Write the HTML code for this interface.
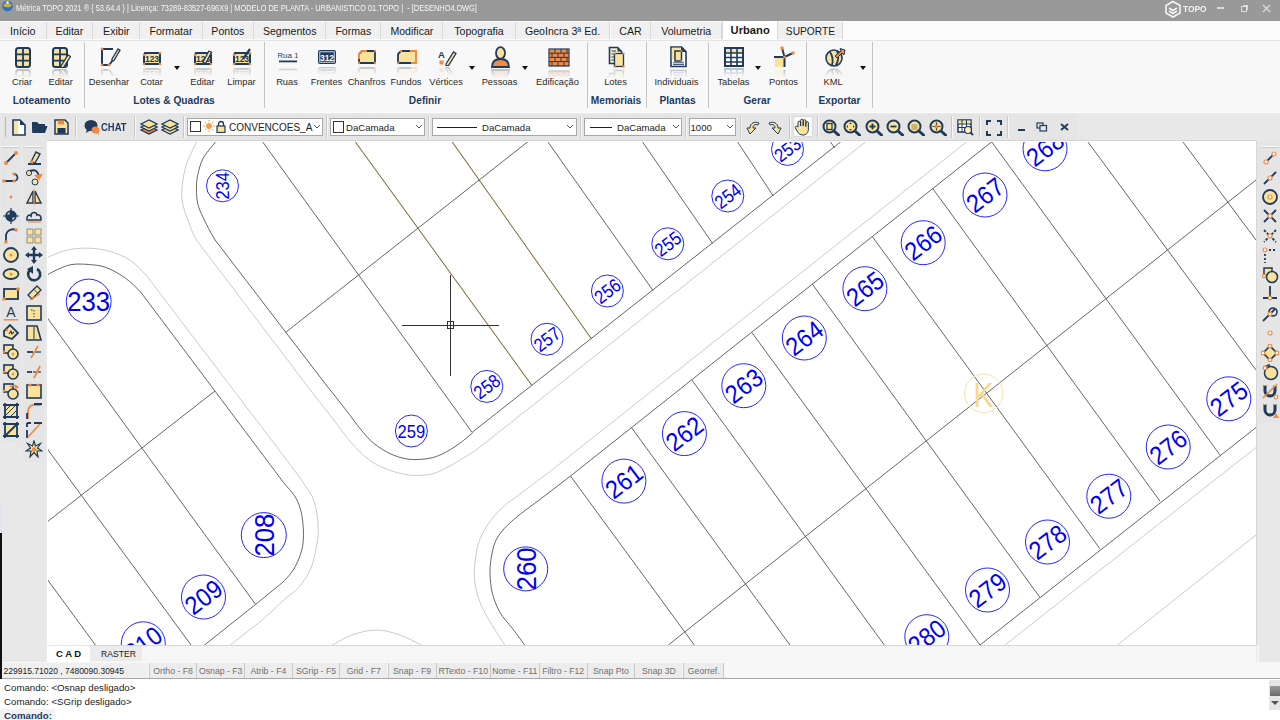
<!DOCTYPE html>
<html><head><meta charset="utf-8"><title>Metrica TOPO</title>
<style>
html,body{margin:0;padding:0;}
body{width:1280px;height:720px;overflow:hidden;position:relative;background:#e8e8e8;font-family:"Liberation Sans",sans-serif;color:#222;}
.t{position:absolute;white-space:nowrap;}
.rl{position:absolute;font-size:9.3px;color:#2a2a2a;white-space:nowrap;transform:translateX(-50%);top:76.7px;line-height:11px;}
.gl{position:absolute;font-size:10.2px;font-weight:bold;color:#1e3a5c;white-space:nowrap;transform:translateX(-50%);top:95px;line-height:12px;}
.sep{position:absolute;width:1px;background:#c4c4c4;}
.tab{position:absolute;top:22px;height:17px;background:#f0f0f0;border-right:1px solid #d9d9d9;box-sizing:border-box;font-size:10.6px;color:#1a1a1a;text-align:center;line-height:19px;}
.tsep{position:absolute;top:116px;height:22px;width:1px;background:#c8c8c8;border-right:1px solid #f8f8f8;}
.combo{position:absolute;top:118px;height:18px;background:#fff;border:1px solid #a8a8a8;box-sizing:border-box;}
.ct{position:absolute;top:2px;font-size:9.6px;line-height:13px;color:#222;white-space:nowrap;}
.chev{position:absolute;top:5px;width:8px;height:6px;}
.sb{position:absolute;top:663px;height:15px;background:#ececec;border-left:1px solid #c9c9c9;box-sizing:border-box;font-size:8.7px;color:#707070;text-align:center;line-height:16px;}
.refl{opacity:0.3;-webkit-mask-image:linear-gradient(#000,transparent);mask-image:linear-gradient(#000,transparent);}
</style></head><body>

<div style="position:absolute;left:0px;top:0px;width:1280px;height:21px;background:#999999"></div>
<svg style="position:absolute;left:1px;top:0px" width="13" height="12" viewBox="0 0 13 12"><circle cx="6.5" cy="6" r="5.3" fill="#2a73c0"/><ellipse cx="6.5" cy="5.2" rx="4" ry="2" fill="#c9b040"/><circle cx="6.5" cy="2.5" r="1.3" fill="#fff"/></svg>
<div style="position:absolute;left:16px;top:3.5px;white-space:nowrap;font-size:8.2px;line-height:9px;color:#f7f7f7;transform:scaleX(0.905);transform-origin:0 0;">Métrica TOPO 2021 ® { 53.64.4 } | Licença: 73289-83527-696X9 | MODELO DE PLANTA - URBANISTICO 01.TOPO |&nbsp; - [DESENHO4.DWG]</div>
<svg style="position:absolute;left:1163px;top:0px" width="20" height="18" viewBox="0 0 20 18"><g fill="none" stroke="#f4f4f4" stroke-width="1.6"><path d="M10 1.5 L17 5.5 L17 13 L10 17 L3 13 L3 5.5 Z"/><path d="M6 8 L10 10.5 L14 8 M6 11 L10 13.5 L14 11"/></g></svg>
<div style="position:absolute;left:1182.5px;top:2.5px;white-space:nowrap;font-size:9.5px;line-height:12px;font-weight:bold;color:#f2f2f2;letter-spacing:0px;transform:scaleX(0.88);transform-origin:0 0;">TOPO</div>
<div style="position:absolute;left:1217px;top:7px;width:7px;height:1.5px;background:#dcdcdc"></div>
<div style="position:absolute;left:1241px;top:6px;width:6px;height:6px;border:1.2px solid #dcdcdc;box-sizing:border-box"></div>
<div style="position:absolute;left:1242.5px;top:4.5px;width:5.5px;height:5.5px;border-top:1.2px solid #dcdcdc;border-right:1.2px solid #dcdcdc;box-sizing:border-box"></div>
<svg style="position:absolute;left:1262px;top:4px" width="9" height="9" viewBox="0 0 9 9"><path d="M1 1 L8 8 M8 1 L1 8" stroke="#dcdcdc" stroke-width="1.2"/></svg>
<div style="position:absolute;left:0px;top:21px;width:1280px;height:19px;background:#fbfbfb"></div>
<div class="tab" style="left:0.0px;width:46.5px">Início</div>
<div class="tab" style="left:46.5px;width:46.9px">Editar</div>
<div class="tab" style="left:93.4px;width:46.9px">Exibir</div>
<div class="tab" style="left:140.3px;width:62.3px">Formatar</div>
<div class="tab" style="left:202.6px;width:51.5px">Pontos</div>
<div class="tab" style="left:254.1px;width:72.2px">Segmentos</div>
<div class="tab" style="left:326.3px;width:55.1px">Formas</div>
<div class="tab" style="left:381.4px;width:62.0px">Modificar</div>
<div class="tab" style="left:443.4px;width:72.2px">Topografia</div>
<div class="tab" style="left:515.6px;width:94.9px">GeoIncra 3ª Ed.</div>
<div class="tab" style="left:610.5px;width:40.9px">CAR</div>
<div class="tab" style="left:651.4px;width:70.6px">Volumetria</div>
<div class="tab" style="left:722px;width:56.3px;top:21px;height:19px;background:#ffffff;border-left:1px solid #d9d9d9;font-weight:bold;font-size:11.2px;line-height:18px;">Urbano</div>
<div class="tab" style="left:778.3px;width:65.2px;font-size:10.2px">SUPORTE</div>
<div style="position:absolute;left:0px;top:40px;width:1280px;height:72px;background:#f8f8f8;border-top:1px solid #e4e4e4;box-sizing:border-box"></div>
<div class="sep" style="left:84px;top:42px;height:66px"></div>
<div class="sep" style="left:264px;top:42px;height:66px"></div>
<div class="sep" style="left:587px;top:42px;height:66px"></div>
<div class="sep" style="left:646px;top:42px;height:66px"></div>
<div class="sep" style="left:708px;top:42px;height:66px"></div>
<div class="sep" style="left:806px;top:42px;height:66px"></div>
<div class="sep" style="left:872px;top:42px;height:66px"></div>
<svg style="position:absolute;left:14.5px;top:47px" width="16" height="21" viewBox="0 0 16 21"><rect x="1" y="1" width="14" height="19" rx="2.5" fill="#f9e29c" stroke="#1e3a5c" stroke-width="2"/><path d="M8 1 V20 M1 7.3 H15 M1 13.6 H15" stroke="#1e3a5c" stroke-width="1.8"/></svg><svg class="refl" style="position:absolute;left:14.5px;top:69px;" width="16" height="9" viewBox="0 0 16 9"><g transform="translate(0 9) scale(1 -1)"><g transform="translate(0 -12)"><rect x="1" y="1" width="14" height="19" rx="2.5" fill="#f9e29c" stroke="#1e3a5c" stroke-width="2"/><path d="M8 1 V20 M1 7.3 H15 M1 13.6 H15" stroke="#1e3a5c" stroke-width="1.8"/></g></g></svg>
<svg style="position:absolute;left:51.5px;top:47px" width="19" height="21" viewBox="0 0 19 21"><rect x="1" y="1" width="14" height="19" rx="2.5" fill="#f9e29c" stroke="#1e3a5c" stroke-width="2"/><path d="M8 1 V20 M1 7.3 H15 M1 13.6 H15" stroke="#1e3a5c" stroke-width="1.8"/><path d="M9 19 L16 8 L18.5 9.5 L11.5 20.5 L9 21 Z" fill="#f9e29c" stroke="#1e3a5c" stroke-width="1.3"/></svg><svg class="refl" style="position:absolute;left:51.5px;top:69px;" width="19" height="9" viewBox="0 0 19 9"><g transform="translate(0 9) scale(1 -1)"><g transform="translate(0 -12)"><rect x="1" y="1" width="14" height="19" rx="2.5" fill="#f9e29c" stroke="#1e3a5c" stroke-width="2"/><path d="M8 1 V20 M1 7.3 H15 M1 13.6 H15" stroke="#1e3a5c" stroke-width="1.8"/><path d="M9 19 L16 8 L18.5 9.5 L11.5 20.5 L9 21 Z" fill="#f9e29c" stroke="#1e3a5c" stroke-width="1.3"/></g></g></svg>
<svg style="position:absolute;left:99.5px;top:46px" width="21" height="21" viewBox="0 0 21 21"><path d="M2 3 H13 M2 3 V19 H9 L13 14" fill="none" stroke="#1e3a5c" stroke-width="2"/><circle cx="2" cy="3" r="1.4" fill="#ef8a45"/><circle cx="2" cy="19" r="1.4" fill="#ef8a45"/><circle cx="9" cy="19" r="1.4" fill="#ef8a45"/><path d="M12 13 L18 3 L20 4.2 L14 14.5 L12 15 Z" fill="#f9e29c" stroke="#1e3a5c" stroke-width="1.3"/></svg><svg class="refl" style="position:absolute;left:99.5px;top:68px;" width="21" height="9" viewBox="0 0 21 9"><g transform="translate(0 9) scale(1 -1)"><g transform="translate(0 -12)"><path d="M2 3 H13 M2 3 V19 H9 L13 14" fill="none" stroke="#1e3a5c" stroke-width="2"/><circle cx="2" cy="3" r="1.4" fill="#ef8a45"/><circle cx="2" cy="19" r="1.4" fill="#ef8a45"/><circle cx="9" cy="19" r="1.4" fill="#ef8a45"/><path d="M12 13 L18 3 L20 4.2 L14 14.5 L12 15 Z" fill="#f9e29c" stroke="#1e3a5c" stroke-width="1.3"/></g></g></svg>
<svg style="position:absolute;left:142.0px;top:50px" width="20" height="16" viewBox="0 0 20 16"><path d="M3 3 H18 V14 H2 V5 Z" fill="#f9e29c" stroke="#1e3a5c" stroke-width="2"/><text x="10" y="12" font-size="8.5" font-family="Liberation Sans" font-weight="bold" fill="#1e3a5c" text-anchor="middle">123</text><circle cx="2" cy="5" r="1.3" fill="#ef8a45"/><circle cx="18" cy="3" r="1.3" fill="#ef8a45"/><circle cx="2" cy="14" r="1.3" fill="#ef8a45"/><circle cx="18" cy="14" r="1.3" fill="#ef8a45"/></svg><svg class="refl" style="position:absolute;left:142.0px;top:67px;" width="20" height="9" viewBox="0 0 20 9"><g transform="translate(0 9) scale(1 -1)"><g transform="translate(0 -7)"><path d="M3 3 H18 V14 H2 V5 Z" fill="#f9e29c" stroke="#1e3a5c" stroke-width="2"/><text x="10" y="12" font-size="8.5" font-family="Liberation Sans" font-weight="bold" fill="#1e3a5c" text-anchor="middle">123</text><circle cx="2" cy="5" r="1.3" fill="#ef8a45"/><circle cx="18" cy="3" r="1.3" fill="#ef8a45"/><circle cx="2" cy="14" r="1.3" fill="#ef8a45"/><circle cx="18" cy="14" r="1.3" fill="#ef8a45"/></g></g></svg>
<svg style="position:absolute;left:192.5px;top:47px" width="20" height="19" viewBox="0 0 20 19"><g transform="translate(0 3)"><path d="M3 3 H18 V14 H2 V5 Z" fill="#f9e29c" stroke="#1e3a5c" stroke-width="2"/><text x="10" y="12" font-size="8.5" font-family="Liberation Sans" font-weight="bold" fill="#1e3a5c" text-anchor="middle">123</text><circle cx="2" cy="5" r="1.3" fill="#ef8a45"/><circle cx="18" cy="3" r="1.3" fill="#ef8a45"/><circle cx="2" cy="14" r="1.3" fill="#ef8a45"/><circle cx="18" cy="14" r="1.3" fill="#ef8a45"/></g><path d="M10 15 L16 4 L18.5 5.3 L12.5 16.5 Z" fill="#f9e29c" stroke="#1e3a5c" stroke-width="1.2"/></svg><svg class="refl" style="position:absolute;left:192.5px;top:67px;" width="20" height="9" viewBox="0 0 20 9"><g transform="translate(0 9) scale(1 -1)"><g transform="translate(0 -10)"><g transform="translate(0 3)"><path d="M3 3 H18 V14 H2 V5 Z" fill="#f9e29c" stroke="#1e3a5c" stroke-width="2"/><text x="10" y="12" font-size="8.5" font-family="Liberation Sans" font-weight="bold" fill="#1e3a5c" text-anchor="middle">123</text><circle cx="2" cy="5" r="1.3" fill="#ef8a45"/><circle cx="18" cy="3" r="1.3" fill="#ef8a45"/><circle cx="2" cy="14" r="1.3" fill="#ef8a45"/><circle cx="18" cy="14" r="1.3" fill="#ef8a45"/></g><path d="M10 15 L16 4 L18.5 5.3 L12.5 16.5 Z" fill="#f9e29c" stroke="#1e3a5c" stroke-width="1.2"/></g></g></svg>
<svg style="position:absolute;left:231.5px;top:47px" width="20" height="19" viewBox="0 0 20 19"><g transform="translate(0 3)"><path d="M3 3 H18 V14 H2 V5 Z" fill="#f9e29c" stroke="#1e3a5c" stroke-width="2"/><text x="10" y="12" font-size="8.5" font-family="Liberation Sans" font-weight="bold" fill="#1e3a5c" text-anchor="middle">123</text><circle cx="2" cy="5" r="1.3" fill="#ef8a45"/><circle cx="18" cy="3" r="1.3" fill="#ef8a45"/><circle cx="2" cy="14" r="1.3" fill="#ef8a45"/><circle cx="18" cy="14" r="1.3" fill="#ef8a45"/></g><path d="M11 12 L18 2" stroke="#1e3a5c" stroke-width="2.2"/></svg><svg class="refl" style="position:absolute;left:231.5px;top:67px;" width="20" height="9" viewBox="0 0 20 9"><g transform="translate(0 9) scale(1 -1)"><g transform="translate(0 -10)"><g transform="translate(0 3)"><path d="M3 3 H18 V14 H2 V5 Z" fill="#f9e29c" stroke="#1e3a5c" stroke-width="2"/><text x="10" y="12" font-size="8.5" font-family="Liberation Sans" font-weight="bold" fill="#1e3a5c" text-anchor="middle">123</text><circle cx="2" cy="5" r="1.3" fill="#ef8a45"/><circle cx="18" cy="3" r="1.3" fill="#ef8a45"/><circle cx="2" cy="14" r="1.3" fill="#ef8a45"/><circle cx="18" cy="14" r="1.3" fill="#ef8a45"/></g><path d="M11 12 L18 2" stroke="#1e3a5c" stroke-width="2.2"/></g></g></svg>
<svg style="position:absolute;left:277.5px;top:49px" width="20" height="16" viewBox="0 0 20 16"><text x="10" y="9" font-size="8" font-family="Liberation Sans" fill="#1e3a5c" text-anchor="middle">Rua 1</text><rect x="1" y="11.5" width="18" height="1.8" fill="#1e3a5c"/></svg><svg class="refl" style="position:absolute;left:277.5px;top:66px;" width="20" height="9" viewBox="0 0 20 9"><g transform="translate(0 9) scale(1 -1)"><g transform="translate(0 -7)"><text x="10" y="9" font-size="8" font-family="Liberation Sans" fill="#1e3a5c" text-anchor="middle">Rua 1</text><rect x="1" y="11.5" width="18" height="1.8" fill="#1e3a5c"/></g></g></svg>
<svg style="position:absolute;left:316.5px;top:49px" width="20" height="16" viewBox="0 0 20 16"><rect x="1" y="1" width="18" height="14" rx="2" fill="#1e3a5c"/><rect x="2.8" y="2.8" width="14.4" height="10.4" fill="none" stroke="#fff" stroke-width="0.8"/><text x="10" y="11.5" font-size="8.5" font-weight="bold" font-family="Liberation Sans" fill="#fff" text-anchor="middle">312</text></svg><svg class="refl" style="position:absolute;left:316.5px;top:66px;" width="20" height="9" viewBox="0 0 20 9"><g transform="translate(0 9) scale(1 -1)"><g transform="translate(0 -7)"><rect x="1" y="1" width="18" height="14" rx="2" fill="#1e3a5c"/><rect x="2.8" y="2.8" width="14.4" height="10.4" fill="none" stroke="#fff" stroke-width="0.8"/><text x="10" y="11.5" font-size="8.5" font-weight="bold" font-family="Liberation Sans" fill="#fff" text-anchor="middle">312</text></g></g></svg>
<svg style="position:absolute;left:356.5px;top:49px" width="20" height="16" viewBox="0 0 20 16"><path d="M5 2 H18 V14 H2 V5 Z" fill="#f9e29c" stroke="#1e3a5c" stroke-width="1.8"/><path d="M2 10 V5 L5 2 H10" fill="none" stroke="#ef8a45" stroke-width="2"/><circle cx="18" cy="2" r="1.2" fill="#ef8a45"/><circle cx="2" cy="14" r="1.2" fill="#ef8a45"/><circle cx="18" cy="14" r="1.2" fill="#ef8a45"/></svg><svg class="refl" style="position:absolute;left:356.5px;top:66px;" width="20" height="9" viewBox="0 0 20 9"><g transform="translate(0 9) scale(1 -1)"><g transform="translate(0 -7)"><path d="M5 2 H18 V14 H2 V5 Z" fill="#f9e29c" stroke="#1e3a5c" stroke-width="1.8"/><path d="M2 10 V5 L5 2 H10" fill="none" stroke="#ef8a45" stroke-width="2"/><circle cx="18" cy="2" r="1.2" fill="#ef8a45"/><circle cx="2" cy="14" r="1.2" fill="#ef8a45"/><circle cx="18" cy="14" r="1.2" fill="#ef8a45"/></g></g></svg>
<svg style="position:absolute;left:395.5px;top:49px" width="22" height="16" viewBox="0 0 22 16"><path d="M5 2 H20 V14 H2 V5 Z" fill="#f9e29c" stroke="#1e3a5c" stroke-width="1.8"/><path d="M14 2 H20 V14 H15" fill="none" stroke="#ef8a45" stroke-width="2"/><circle cx="5" cy="2" r="1.2" fill="#ef8a45"/><circle cx="2" cy="14" r="1.2" fill="#ef8a45"/></svg><svg class="refl" style="position:absolute;left:395.5px;top:66px;" width="22" height="9" viewBox="0 0 22 9"><g transform="translate(0 9) scale(1 -1)"><g transform="translate(0 -7)"><path d="M5 2 H20 V14 H2 V5 Z" fill="#f9e29c" stroke="#1e3a5c" stroke-width="1.8"/><path d="M14 2 H20 V14 H15" fill="none" stroke="#ef8a45" stroke-width="2"/><circle cx="5" cy="2" r="1.2" fill="#ef8a45"/><circle cx="2" cy="14" r="1.2" fill="#ef8a45"/></g></g></svg>
<svg style="position:absolute;left:436.5px;top:49px" width="20" height="17" viewBox="0 0 20 17"><text x="4.5" y="9" font-size="9.5" font-weight="bold" font-family="Liberation Sans" fill="#1e3a5c" text-anchor="middle">A</text><rect x="2.5" y="11.5" width="4" height="4" fill="#ef8a45"/><path d="M9 15 L16.5 3 L19 4.5 L11.5 16.5 L9 17 Z" fill="#f9e29c" stroke="#1e3a5c" stroke-width="1.3"/></svg><svg class="refl" style="position:absolute;left:436.5px;top:67px;" width="20" height="9" viewBox="0 0 20 9"><g transform="translate(0 9) scale(1 -1)"><g transform="translate(0 -8)"><text x="4.5" y="9" font-size="9.5" font-weight="bold" font-family="Liberation Sans" fill="#1e3a5c" text-anchor="middle">A</text><rect x="2.5" y="11.5" width="4" height="4" fill="#ef8a45"/><path d="M9 15 L16.5 3 L19 4.5 L11.5 16.5 L9 17 Z" fill="#f9e29c" stroke="#1e3a5c" stroke-width="1.3"/></g></g></svg>
<svg style="position:absolute;left:490.0px;top:46px" width="21" height="22" viewBox="0 0 21 22"><path d="M2 21 C2 15 6 13 10.5 13 C15 13 19 15 19 21 Z" fill="#ef8a45" stroke="#1e3a5c" stroke-width="1.8"/><ellipse cx="10.5" cy="7" rx="4.5" ry="5.8" fill="#f9e29c" stroke="#1e3a5c" stroke-width="1.8"/></svg><svg class="refl" style="position:absolute;left:490.0px;top:69px;" width="21" height="9" viewBox="0 0 21 9"><g transform="translate(0 9) scale(1 -1)"><g transform="translate(0 -13)"><path d="M2 21 C2 15 6 13 10.5 13 C15 13 19 15 19 21 Z" fill="#ef8a45" stroke="#1e3a5c" stroke-width="1.8"/><ellipse cx="10.5" cy="7" rx="4.5" ry="5.8" fill="#f9e29c" stroke="#1e3a5c" stroke-width="1.8"/></g></g></svg>
<svg style="position:absolute;left:547.5px;top:48px" width="22" height="20" viewBox="0 0 22 20"><g transform="translate(0 -1)"><rect x="1" y="2" width="20" height="17" fill="#1e3a5c" stroke="#1e3a5c" stroke-width="1.2"/><rect x="1.5" y="2.5" width="5.0" height="3.2" fill="#ef8a45"/><rect x="7.5" y="2.5" width="5.0" height="3.2" fill="#ef8a45"/><rect x="13.5" y="2.5" width="5.0" height="3.2" fill="#ef8a45"/><rect x="19.5" y="2.5" width="1.0" height="3.2" fill="#ef8a45"/><rect x="1.5" y="6.7" width="2.0" height="3.2" fill="#ef8a45"/><rect x="4.5" y="6.7" width="5.0" height="3.2" fill="#ef8a45"/><rect x="10.5" y="6.7" width="5.0" height="3.2" fill="#ef8a45"/><rect x="16.5" y="6.7" width="4.0" height="3.2" fill="#ef8a45"/><rect x="1.5" y="10.9" width="5.0" height="3.2" fill="#ef8a45"/><rect x="7.5" y="10.9" width="5.0" height="3.2" fill="#ef8a45"/><rect x="13.5" y="10.9" width="5.0" height="3.2" fill="#ef8a45"/><rect x="19.5" y="10.9" width="1.0" height="3.2" fill="#ef8a45"/><rect x="1.5" y="15.1" width="2.0" height="3.2" fill="#ef8a45"/><rect x="4.5" y="15.1" width="5.0" height="3.2" fill="#ef8a45"/><rect x="10.5" y="15.1" width="5.0" height="3.2" fill="#ef8a45"/><rect x="16.5" y="15.1" width="4.0" height="3.2" fill="#ef8a45"/></g></svg><svg class="refl" style="position:absolute;left:547.5px;top:69px;" width="22" height="9" viewBox="0 0 22 9"><g transform="translate(0 9) scale(1 -1)"><g transform="translate(0 -11)"><g transform="translate(0 -1)"><rect x="1" y="2" width="20" height="17" fill="#1e3a5c" stroke="#1e3a5c" stroke-width="1.2"/><rect x="1.5" y="2.5" width="5.0" height="3.2" fill="#ef8a45"/><rect x="7.5" y="2.5" width="5.0" height="3.2" fill="#ef8a45"/><rect x="13.5" y="2.5" width="5.0" height="3.2" fill="#ef8a45"/><rect x="19.5" y="2.5" width="1.0" height="3.2" fill="#ef8a45"/><rect x="1.5" y="6.7" width="2.0" height="3.2" fill="#ef8a45"/><rect x="4.5" y="6.7" width="5.0" height="3.2" fill="#ef8a45"/><rect x="10.5" y="6.7" width="5.0" height="3.2" fill="#ef8a45"/><rect x="16.5" y="6.7" width="4.0" height="3.2" fill="#ef8a45"/><rect x="1.5" y="10.9" width="5.0" height="3.2" fill="#ef8a45"/><rect x="7.5" y="10.9" width="5.0" height="3.2" fill="#ef8a45"/><rect x="13.5" y="10.9" width="5.0" height="3.2" fill="#ef8a45"/><rect x="19.5" y="10.9" width="1.0" height="3.2" fill="#ef8a45"/><rect x="1.5" y="15.1" width="2.0" height="3.2" fill="#ef8a45"/><rect x="4.5" y="15.1" width="5.0" height="3.2" fill="#ef8a45"/><rect x="10.5" y="15.1" width="5.0" height="3.2" fill="#ef8a45"/><rect x="16.5" y="15.1" width="4.0" height="3.2" fill="#ef8a45"/></g></g></g></svg>
<svg style="position:absolute;left:608.0px;top:46px" width="17" height="22" viewBox="0 0 17 22"><path d="M1.5 1.5 H9.5 L13.5 5.5 V17.5 H1.5 Z" fill="#f6efd2" stroke="#1e3a5c" stroke-width="1.6"/><path d="M9.5 1 L14 5.5 H9.5 Z" fill="#1e3a5c"/><path d="M3.5 5 H8 M3.5 8 H8 M3.5 11 H8 M3.5 14 H8" stroke="#1e3a5c" stroke-width="1"/><rect x="6.5" y="7.5" width="9" height="13" fill="#f9e29c" stroke="#1e3a5c" stroke-width="1.3"/><circle cx="6.5" cy="7.5" r="1.1" fill="#ef8a45"/><circle cx="15.5" cy="7.5" r="1.1" fill="#ef8a45"/><circle cx="6.5" cy="20.5" r="1.1" fill="#ef8a45"/><circle cx="15.5" cy="20.5" r="1.1" fill="#ef8a45"/></svg><svg class="refl" style="position:absolute;left:608.0px;top:69px;" width="17" height="9" viewBox="0 0 17 9"><g transform="translate(0 9) scale(1 -1)"><g transform="translate(0 -13)"><path d="M1.5 1.5 H9.5 L13.5 5.5 V17.5 H1.5 Z" fill="#f6efd2" stroke="#1e3a5c" stroke-width="1.6"/><path d="M9.5 1 L14 5.5 H9.5 Z" fill="#1e3a5c"/><path d="M3.5 5 H8 M3.5 8 H8 M3.5 11 H8 M3.5 14 H8" stroke="#1e3a5c" stroke-width="1"/><rect x="6.5" y="7.5" width="9" height="13" fill="#f9e29c" stroke="#1e3a5c" stroke-width="1.3"/><circle cx="6.5" cy="7.5" r="1.1" fill="#ef8a45"/><circle cx="15.5" cy="7.5" r="1.1" fill="#ef8a45"/><circle cx="6.5" cy="20.5" r="1.1" fill="#ef8a45"/><circle cx="15.5" cy="20.5" r="1.1" fill="#ef8a45"/></g></g></svg>
<svg style="position:absolute;left:669.5px;top:46px" width="17" height="22" viewBox="0 0 17 22"><path d="M1 1 H11.5 L16 5.5 V20.5 H1 Z" fill="#fff" stroke="#1e3a5c" stroke-width="1.6"/><rect x="1.8" y="1.8" width="9.5" height="12" fill="#f9e29c"/><path d="M11 0.8 L16.2 6 H11 Z" fill="#1e3a5c"/><rect x="5" y="5" width="6.5" height="10" fill="#f9e29c" stroke="#1e3a5c" stroke-width="1.5"/><circle cx="11.5" cy="5" r="1" fill="#ef8a45"/><circle cx="11.5" cy="15" r="1" fill="#ef8a45"/><path d="M3 16.8 H14 M3 18.6 H14" stroke="#1e3a5c" stroke-width="0.9"/></svg><svg class="refl" style="position:absolute;left:669.5px;top:69px;" width="17" height="9" viewBox="0 0 17 9"><g transform="translate(0 9) scale(1 -1)"><g transform="translate(0 -13)"><path d="M1 1 H11.5 L16 5.5 V20.5 H1 Z" fill="#fff" stroke="#1e3a5c" stroke-width="1.6"/><rect x="1.8" y="1.8" width="9.5" height="12" fill="#f9e29c"/><path d="M11 0.8 L16.2 6 H11 Z" fill="#1e3a5c"/><rect x="5" y="5" width="6.5" height="10" fill="#f9e29c" stroke="#1e3a5c" stroke-width="1.5"/><circle cx="11.5" cy="5" r="1" fill="#ef8a45"/><circle cx="11.5" cy="15" r="1" fill="#ef8a45"/><path d="M3 16.8 H14 M3 18.6 H14" stroke="#1e3a5c" stroke-width="0.9"/></g></g></svg>
<svg style="position:absolute;left:724.0px;top:47px" width="20" height="20" viewBox="0 0 20 20"><rect x="1" y="1" width="18" height="18" fill="#fff" stroke="#1e3a5c" stroke-width="2"/><rect x="2" y="2" width="16" height="4" fill="#f9e29c"/><path d="M1 6 H19 M1 10.5 H19 M1 15 H19 M7 1 V19 M13 1 V19" stroke="#1e3a5c" stroke-width="1.6"/></svg><svg class="refl" style="position:absolute;left:724.0px;top:68px;" width="20" height="9" viewBox="0 0 20 9"><g transform="translate(0 9) scale(1 -1)"><g transform="translate(0 -11)"><rect x="1" y="1" width="18" height="18" fill="#fff" stroke="#1e3a5c" stroke-width="2"/><rect x="2" y="2" width="16" height="4" fill="#f9e29c"/><path d="M1 6 H19 M1 10.5 H19 M1 15 H19 M7 1 V19 M13 1 V19" stroke="#1e3a5c" stroke-width="1.6"/></g></g></svg>
<svg style="position:absolute;left:772.5px;top:45px" width="23" height="23" viewBox="0 0 23 23"><rect x="2" y="12" width="9" height="10" fill="#f9e29c"/><path d="M1 12 H12 M11.5 12 V22 M11.5 12 L9 3 M11.5 12 L20 8" stroke="#1e3a5c" stroke-width="2" fill="none"/><circle cx="9" cy="3" r="1.8" fill="#ef8a45"/><circle cx="20" cy="8" r="1.8" fill="#ef8a45"/><circle cx="11.5" cy="12" r="1.5" fill="#ef8a45"/></svg><svg class="refl" style="position:absolute;left:772.5px;top:69px;" width="23" height="9" viewBox="0 0 23 9"><g transform="translate(0 9) scale(1 -1)"><g transform="translate(0 -14)"><rect x="2" y="12" width="9" height="10" fill="#f9e29c"/><path d="M1 12 H12 M11.5 12 V22 M11.5 12 L9 3 M11.5 12 L20 8" stroke="#1e3a5c" stroke-width="2" fill="none"/><circle cx="9" cy="3" r="1.8" fill="#ef8a45"/><circle cx="20" cy="8" r="1.8" fill="#ef8a45"/><circle cx="11.5" cy="12" r="1.5" fill="#ef8a45"/></g></g></svg>
<svg style="position:absolute;left:823.5px;top:47px" width="22" height="20" viewBox="0 0 22 20"><circle cx="10" cy="11" r="8" fill="#f9e29c" stroke="#1e3a5c" stroke-width="1.6"/><path d="M6 5 Q10 11 8 18 M13 4 Q16 11 12 18" stroke="#1e3a5c" stroke-width="1.8" fill="none"/><path d="M11 9 L17 4 L16 1.5 L21 3 L20 8 L18 6 L13 11 Z" fill="#ef8a45" stroke="#1e3a5c" stroke-width="1"/></svg><svg class="refl" style="position:absolute;left:823.5px;top:68px;" width="22" height="9" viewBox="0 0 22 9"><g transform="translate(0 9) scale(1 -1)"><g transform="translate(0 -11)"><circle cx="10" cy="11" r="8" fill="#f9e29c" stroke="#1e3a5c" stroke-width="1.6"/><path d="M6 5 Q10 11 8 18 M13 4 Q16 11 12 18" stroke="#1e3a5c" stroke-width="1.8" fill="none"/><path d="M11 9 L17 4 L16 1.5 L21 3 L20 8 L18 6 L13 11 Z" fill="#ef8a45" stroke="#1e3a5c" stroke-width="1"/></g></g></svg>
<svg style="position:absolute;left:173.5px;top:65.5px" width="6" height="4.5" viewBox="0 0 6 4.5"><path d="M0 0 H6 L3 4 Z" fill="#111"/></svg>
<svg style="position:absolute;left:468.5px;top:65.5px" width="6" height="4.5" viewBox="0 0 6 4.5"><path d="M0 0 H6 L3 4 Z" fill="#111"/></svg>
<svg style="position:absolute;left:521.5px;top:65.5px" width="6" height="4.5" viewBox="0 0 6 4.5"><path d="M0 0 H6 L3 4 Z" fill="#111"/></svg>
<svg style="position:absolute;left:754.5px;top:65.5px" width="6" height="4.5" viewBox="0 0 6 4.5"><path d="M0 0 H6 L3 4 Z" fill="#111"/></svg>
<svg style="position:absolute;left:859.5px;top:65.5px" width="6" height="4.5" viewBox="0 0 6 4.5"><path d="M0 0 H6 L3 4 Z" fill="#111"/></svg>
<div class="rl" style="left:22.0px">Criar</div>
<div class="rl" style="left:60.6px">Editar</div>
<div class="rl" style="left:109.0px">Desenhar</div>
<div class="rl" style="left:151.5px">Cotar</div>
<div class="rl" style="left:202.5px">Editar</div>
<div class="rl" style="left:241.5px">Limpar</div>
<div class="rl" style="left:287.0px">Ruas</div>
<div class="rl" style="left:326.5px">Frentes</div>
<div class="rl" style="left:366.5px">Chanfros</div>
<div class="rl" style="left:406.0px">Fundos</div>
<div class="rl" style="left:446.0px">Vértices</div>
<div class="rl" style="left:499.5px">Pessoas</div>
<div class="rl" style="left:557.5px">Edificação</div>
<div class="rl" style="left:615.5px">Lotes</div>
<div class="rl" style="left:676.5px">Individuais</div>
<div class="rl" style="left:733.5px">Tabelas</div>
<div class="rl" style="left:783.5px">Pontos</div>
<div class="rl" style="left:833.0px">KML</div>
<div class="gl" style="left:41.5px">Loteamento</div>
<div class="gl" style="left:174.0px">Lotes &amp; Quadras</div>
<div class="gl" style="left:425.0px">Definir</div>
<div class="gl" style="left:616.0px">Memoriais</div>
<div class="gl" style="left:677.5px">Plantas</div>
<div class="gl" style="left:757.0px">Gerar</div>
<div class="gl" style="left:839.5px">Exportar</div>
<div style="position:absolute;left:0px;top:112px;width:1280px;height:29px;background:#e8e8e8;border-top:1px solid #fdfdfd;box-sizing:border-box"></div>
<div style="position:absolute;left:2px;top:114px;width:1075px;height:26px;background:#e5e5e5"></div>
<div style="position:absolute;left:5px;top:117px;width:1px;height:20px;background:#b8b8b8"></div>
<svg style="position:absolute;left:12px;top:119px" width="14" height="17" viewBox="0 0 14 17"><path d="M1 1 H8 L13 6 V16 H1 Z" fill="#fff" stroke="#1e3a5c" stroke-width="1.6"/><path d="M2 2 H6 V15 H2 Z" fill="#f9e29c"/><path d="M8 1 V6 H13 Z" fill="#1e3a5c"/></svg>
<svg style="position:absolute;left:31px;top:120px" width="17" height="14" viewBox="0 0 17 14"><path d="M1 2 H6 L8 4 H14 V6 H4 L1 13 Z" fill="#1e3a5c"/><path d="M3.5 6 H16.5 L14 13 H1 Z" fill="#1e3a5c"/></svg>
<svg style="position:absolute;left:54px;top:119px" width="15" height="16" viewBox="0 0 15 16"><path d="M1 1 H11 L14 4 V15 H1 Z" fill="#f9e29c" stroke="#1e3a5c" stroke-width="1.5"/><rect x="4" y="1.5" width="6" height="4" fill="#ef8a45"/><rect x="3.5" y="9" width="8" height="5.5" fill="#1e3a5c"/></svg>
<div class="tsep" style="left:75px"></div>
<svg style="position:absolute;left:84px;top:119px" width="16" height="17" viewBox="0 0 16 17"><ellipse cx="7" cy="6.5" rx="6.5" ry="5.5" fill="#1e3a5c"/><path d="M3 10 L2 14 L7 11 Z" fill="#1e3a5c"/><ellipse cx="11.5" cy="11" rx="4" ry="3.5" fill="#ef8a45"/><path d="M12 14 L15 16 L14 12 Z" fill="#ef8a45"/></svg>
<div style="position:absolute;left:101px;top:121px;white-space:nowrap;font-size:10.5px;line-height:12px;font-weight:bold;color:#1e3a5c;transform:scaleX(0.9);transform-origin:0 0;">CHAT</div>
<div class="tsep" style="left:134px"></div>
<svg style="position:absolute;left:140px;top:119px" width="18" height="17" viewBox="0 0 18 17"><path d="M1 11 L9 7 L17 11 L9 15 Z" fill="#ef8a45" stroke="#1e3a5c" stroke-width="1.3"/><path d="M1 8 L9 4 L17 8 L9 12 Z" fill="#f9e29c" stroke="#1e3a5c" stroke-width="1.3"/><path d="M1 5 L9 1 L17 5 L9 9 Z" fill="#f9e29c" stroke="#1e3a5c" stroke-width="1.3"/></svg>
<svg style="position:absolute;left:161px;top:119px" width="18" height="17" viewBox="0 0 18 17"><path d="M1 11 L9 7 L17 11 L9 15 Z" fill="#f9e29c" stroke="#1e3a5c" stroke-width="1.3"/><path d="M1 8 L9 4 L17 8 L9 12 Z" fill="#f9e29c" stroke="#1e3a5c" stroke-width="1.3"/><path d="M1 5 L9 1 L17 5 L9 9 Z" fill="#f9e29c" stroke="#1e3a5c" stroke-width="1.3"/></svg>
<div class="tsep" style="left:183px"></div>
<div class="combo" style="left:187px;width:136px"></div>
<div style="position:absolute;left:190px;top:121px;width:11px;height:11px;border:1px solid #333;background:#fff;box-sizing:border-box"></div>
<svg style="position:absolute;left:203px;top:120px" width="12" height="12" viewBox="0 0 12 12"><circle cx="6" cy="6" r="3" fill="#f6a04d"/><g stroke="#f6a04d" stroke-width="1"><path d="M6 0 V2 M6 10 V12 M0 6 H2 M10 6 H12 M1.8 1.8 L3.2 3.2 M8.8 8.8 L10.2 10.2 M1.8 10.2 L3.2 8.8 M8.8 3.2 L10.2 1.8"/></g></svg>
<svg style="position:absolute;left:216px;top:120px" width="10" height="13" viewBox="0 0 10 13"><path d="M2.5 6 V4 A2.5 2.5 0 0 1 7.5 4 V6" fill="none" stroke="#1e3a5c" stroke-width="1.4"/><rect x="1" y="6" width="8" height="6.5" fill="#f9e29c" stroke="#1e3a5c" stroke-width="1.2"/></svg>
<div class="ct" style="left:229px;top:121px;font-size:10px">CONVENCOES_A</div>
<svg style="position:absolute;left:313px;top:124px" width="8" height="6" viewBox="0 0 8 6"><path d="M1 1 L4 4 L7 1" fill="none" stroke="#555" stroke-width="1"/></svg>
<div class="tsep" style="left:326px"></div>
<div class="combo" style="left:330px;width:95px"></div>
<div style="position:absolute;left:333px;top:121px;width:11px;height:12px;border:1px solid #333;background:#fff;box-sizing:border-box"></div>
<div class="ct" style="left:346px;top:121px">DaCamada</div>
<svg style="position:absolute;left:415px;top:124px" width="8" height="6" viewBox="0 0 8 6"><path d="M1 1 L4 4 L7 1" fill="none" stroke="#555" stroke-width="1"/></svg>
<div class="tsep" style="left:428px"></div>
<div class="combo" style="left:432px;width:145px"></div>
<div style="position:absolute;left:437px;top:127px;width:40px;height:1px;background:#222"></div>
<div class="ct" style="left:482px;top:121px">DaCamada</div>
<svg style="position:absolute;left:566px;top:124px" width="8" height="6" viewBox="0 0 8 6"><path d="M1 1 L4 4 L7 1" fill="none" stroke="#555" stroke-width="1"/></svg>
<div class="tsep" style="left:580px"></div>
<div class="combo" style="left:584px;width:98px"></div>
<div style="position:absolute;left:590px;top:127px;width:22px;height:1px;background:#222"></div>
<div class="ct" style="left:617px;top:121px">DaCamada</div>
<svg style="position:absolute;left:672px;top:124px" width="8" height="6" viewBox="0 0 8 6"><path d="M1 1 L4 4 L7 1" fill="none" stroke="#555" stroke-width="1"/></svg>
<div class="tsep" style="left:685px"></div>
<div class="combo" style="left:689px;width:47px"></div>
<div class="ct" style="left:690.5px;top:121px">1000</div>
<svg style="position:absolute;left:726px;top:124px" width="8" height="6" viewBox="0 0 8 6"><path d="M1 1 L4 4 L7 1" fill="none" stroke="#555" stroke-width="1"/></svg>
<div class="tsep" style="left:740px"></div>
<svg style="position:absolute;left:746px;top:120px" width="15" height="15" viewBox="0 0 15 15"><path d="M4 14 L1 8 L4 8 C4 3 9 1 13 3 L12 5 C9 4 7 5 7 8 L10 8 Z" fill="#f9e29c" stroke="#1e3a5c" stroke-width="1"/></svg>
<svg style="position:absolute;left:767px;top:120px" width="15" height="15" viewBox="0 0 15 15"><path d="M11 14 L14 8 L11 8 C11 3 6 1 2 3 L3 5 C6 4 8 5 8 8 L5 8 Z" fill="#f9e29c" stroke="#1e3a5c" stroke-width="1"/></svg>
<div class="tsep" style="left:789px"></div>
<div style="position:absolute;left:793px;top:116px;width:20px;height:21px;background:#fafafa;border:1px solid #dadada;box-sizing:border-box"></div>
<svg style="position:absolute;left:794px;top:118px" width="18" height="18" viewBox="0 0 18 18"><path d="M4 9 V4.5 A1.3 1.3 0 0 1 6.6 4.5 V8 V2.5 A1.3 1.3 0 0 1 9.2 2.5 V8 V3 A1.3 1.3 0 0 1 11.8 3 V8.5 V5 A1.3 1.3 0 0 1 14.4 5 V11 C14.4 15 12 17 9 17 C6 17 4.5 15.5 3 13 L1.2 9.5 A1.2 1.2 0 0 1 3.3 8.5 Z" fill="#f9e29c" stroke="#1e3a5c" stroke-width="1"/></svg>
<div class="tsep" style="left:817px"></div>
<svg style="position:absolute;left:822px;top:119px" width="18" height="17" viewBox="0 0 18 17"><circle cx="7.5" cy="7.5" r="6" fill="#f9e29c" stroke="#1e3a5c" stroke-width="2"/><path d="M12 12 L16.5 16" stroke="#1e3a5c" stroke-width="3" stroke-linecap="round"/><rect x="5" y="4.5" width="5" height="6" fill="none" stroke="#1e3a5c" stroke-width="1.3"/></svg>
<svg style="position:absolute;left:843px;top:119px" width="18" height="17" viewBox="0 0 18 17"><circle cx="7.5" cy="7.5" r="6" fill="#f9e29c" stroke="#1e3a5c" stroke-width="2"/><path d="M12 12 L16.5 16" stroke="#1e3a5c" stroke-width="3" stroke-linecap="round"/><path d="M7.5 3.5 L9 5 H6 Z M7.5 11.5 L9 10 H6 Z M3.5 7.5 L5 6 V9 Z M11.5 7.5 L10 6 V9 Z" fill="#1e3a5c"/></svg>
<svg style="position:absolute;left:865px;top:119px" width="18" height="17" viewBox="0 0 18 17"><circle cx="7.5" cy="7.5" r="6" fill="#f9e29c" stroke="#1e3a5c" stroke-width="2"/><path d="M12 12 L16.5 16" stroke="#1e3a5c" stroke-width="3" stroke-linecap="round"/><path d="M4.5 7.5 H10.5 M7.5 4.5 V10.5" stroke="#1e3a5c" stroke-width="1.8"/></svg>
<svg style="position:absolute;left:886px;top:119px" width="18" height="17" viewBox="0 0 18 17"><circle cx="7.5" cy="7.5" r="6" fill="#f9e29c" stroke="#1e3a5c" stroke-width="2"/><path d="M12 12 L16.5 16" stroke="#1e3a5c" stroke-width="3" stroke-linecap="round"/><path d="M4.5 7.5 H10.5" stroke="#1e3a5c" stroke-width="1.8"/></svg>
<svg style="position:absolute;left:907px;top:119px" width="18" height="17" viewBox="0 0 18 17"><circle cx="7.5" cy="7.5" r="6" fill="#f9e29c" stroke="#1e3a5c" stroke-width="2"/><path d="M12 12 L16.5 16" stroke="#1e3a5c" stroke-width="3" stroke-linecap="round"/><path d="M4.5 6 H10.5 M4.5 8 H10.5 M4.5 10 H10.5" stroke="#8a7a50" stroke-width="0.9"/></svg>
<svg style="position:absolute;left:929px;top:119px" width="18" height="17" viewBox="0 0 18 17"><circle cx="7.5" cy="7.5" r="6" fill="#f9e29c" stroke="#1e3a5c" stroke-width="2"/><path d="M12 12 L16.5 16" stroke="#1e3a5c" stroke-width="3" stroke-linecap="round"/><path d="M7.5 3.5 V11.5 M3.5 7.5 H11.5" stroke="#1e3a5c" stroke-width="1.2"/><circle cx="7.5" cy="7.5" r="2" fill="#ef8a45"/></svg>
<div class="tsep" style="left:951px"></div>
<svg style="position:absolute;left:957px;top:119px" width="17" height="17" viewBox="0 0 17 17"><rect x="1" y="1" width="13" height="12" fill="#fff" stroke="#1e3a5c" stroke-width="1.5"/><rect x="1.5" y="1.5" width="12" height="3" fill="#f9e29c"/><path d="M1 5 H14 M1 8.5 H14 M5 1 V13 M9.5 1 V13" stroke="#1e3a5c" stroke-width="1"/><circle cx="11" cy="11" r="3.5" fill="#fff2b8" stroke="#1e3a5c" stroke-width="1.2"/><path d="M13.5 13.5 L16 16" stroke="#1e3a5c" stroke-width="1.8"/></svg>
<div class="tsep" style="left:979px"></div>
<svg style="position:absolute;left:986px;top:120px" width="16" height="16" viewBox="0 0 16 16"><path d="M1 5 V1 H5 M11 1 H15 V5 M15 11 V15 H11 M5 15 H1 V11" fill="none" stroke="#1e3a5c" stroke-width="2"/></svg>
<div class="tsep" style="left:1007px"></div>
<div style="position:absolute;left:1018px;top:129px;width:7px;height:2px;background:#1e3a5c"></div>
<svg style="position:absolute;left:1036px;top:122px" width="12" height="10" viewBox="0 0 12 10"><rect x="1" y="1" width="6" height="5" fill="none" stroke="#1e3a5c" stroke-width="1.2"/><rect x="4" y="3.5" width="6.5" height="5.5" fill="#e5e5e5" stroke="#1e3a5c" stroke-width="1.2"/></svg>
<svg style="position:absolute;left:1060px;top:123px" width="9" height="8" viewBox="0 0 9 8"><path d="M1 1 L8 7 M8 1 L1 7" stroke="#1e3a5c" stroke-width="1.8"/></svg>
<div style="position:absolute;left:0px;top:141px;width:47px;height:521px;background:#e8e8e8"></div>
<div style="position:absolute;left:1px;top:141px;width:20px;height:301px;background:#e5e5e5"></div>
<div style="position:absolute;left:23px;top:141px;width:22px;height:321px;background:#e5e5e5"></div>
<div style="position:absolute;left:2px;top:146px;width:17px;height:2px;background:#fff;border-bottom:1px solid #c8c8c8;box-sizing:border-box"></div>
<div style="position:absolute;left:25px;top:146px;width:17px;height:2px;background:#fff;border-bottom:1px solid #c8c8c8;box-sizing:border-box"></div>
<div style="position:absolute;left:0px;top:505px;width:1.5px;height:28px;background:#dfe3ef"></div>
<div style="position:absolute;left:0px;top:533px;width:1.5px;height:146px;background:#111"></div>
<div style="position:absolute;left:1256px;top:141px;width:24px;height:521px;background:#e8e8e8"></div>
<div style="position:absolute;left:1258px;top:141px;width:22px;height:282px;background:#e5e5e5"></div>
<div style="position:absolute;left:1261px;top:146px;width:17px;height:2px;background:#fff;border-bottom:1px solid #c8c8c8;box-sizing:border-box"></div>
<svg style="position:absolute;left:1.5px;top:149.0px" width="18" height="18" viewBox="0 0 18 18"><path d="M4 14 L14 4" fill="none" stroke="#1e3a5c" stroke-width="1.8"/><circle cx="4" cy="14" r="2" fill="#ef8a45"/><circle cx="14" cy="4" r="2" fill="#ef8a45"/></svg>
<svg style="position:absolute;left:1.5px;top:168.0px" width="18" height="18" viewBox="0 0 18 18"><path d="M2 13 H12 A3.5 3.5 0 0 0 12 6" fill="none" stroke="#1e3a5c" stroke-width="1.8"/><circle cx="2" cy="13" r="1.8" fill="#ef8a45"/><circle cx="12" cy="13" r="1.6" fill="#ef8a45"/><circle cx="12" cy="6" r="1.6" fill="#ef8a45"/></svg>
<svg style="position:absolute;left:1.5px;top:188.0px" width="18" height="18" viewBox="0 0 18 18"><circle cx="9" cy="9" r="1.5" fill="#ef8a45"/></svg>
<svg style="position:absolute;left:1.5px;top:207.0px" width="18" height="18" viewBox="0 0 18 18"><circle cx="9" cy="9" r="5" fill="#f9e29c" stroke="#1e3a5c" stroke-width="1.6"/><path d="M9 4 V14 M4 9 H14" stroke="#1e3a5c" stroke-width="3"/><path d="M9 1 V17 M1 9 H17" stroke="#1e3a5c" stroke-width="1.2"/><path d="M9 4 A5 5 0 0 1 14 9 H9 Z M9 14 A5 5 0 0 1 4 9 H9 Z" fill="#1e3a5c"/></svg>
<svg style="position:absolute;left:1.5px;top:227.0px" width="18" height="18" viewBox="0 0 18 18"><path d="M4 15 V10 A7 7 0 0 1 14 3" fill="none" stroke="#1e3a5c" stroke-width="1.8"/><circle cx="4" cy="15" r="1.8" fill="#ef8a45"/><circle cx="14" cy="3" r="1.8" fill="#ef8a45"/></svg>
<svg style="position:absolute;left:1.5px;top:246.0px" width="18" height="18" viewBox="0 0 18 18"><circle cx="9" cy="9" r="7" fill="#f9e29c" stroke="#1e3a5c" stroke-width="1.8"/><circle cx="9" cy="9" r="1.5" fill="#ef8a45"/></svg>
<svg style="position:absolute;left:1.5px;top:265.0px" width="18" height="18" viewBox="0 0 18 18"><ellipse cx="9" cy="9" rx="7.5" ry="5" fill="#f9e29c" stroke="#1e3a5c" stroke-width="1.8"/><circle cx="9" cy="9" r="1.5" fill="#ef8a45"/></svg>
<svg style="position:absolute;left:1.5px;top:285.0px" width="18" height="18" viewBox="0 0 18 18"><rect x="2" y="4" width="14" height="10" fill="#f9e29c" stroke="#1e3a5c" stroke-width="1.8"/><circle cx="2" cy="14" r="1.8" fill="#ef8a45"/><circle cx="16" cy="4" r="1.8" fill="#ef8a45"/></svg>
<svg style="position:absolute;left:1.5px;top:304.0px" width="18" height="18" viewBox="0 0 18 18"><text x="9" y="13" font-size="14" font-family="Liberation Sans" fill="#1e3a5c" text-anchor="middle">A</text><rect x="2" y="15" width="14" height="1.5" fill="#ef8a45"/></svg>
<svg style="position:absolute;left:1.5px;top:324.0px" width="18" height="18" viewBox="0 0 18 18"><path d="M2 7 L8 1 L16 9 L10 15 L2 12 Z" fill="#f9e29c" stroke="#1e3a5c" stroke-width="1.8"/><path d="M7 10 L9 7 L10 10 L12 8" fill="none" stroke="#1e3a5c" stroke-width="1.2"/><circle cx="5" cy="6" r="1.3" fill="#ef8a45"/></svg>
<svg style="position:absolute;left:1.5px;top:343.0px" width="18" height="18" viewBox="0 0 18 18"><rect x="2" y="2" width="9" height="8" fill="#f9e29c" stroke="#1e3a5c" stroke-width="1.6"/><circle cx="11" cy="11" r="5" fill="#f9e29c" stroke="#1e3a5c" stroke-width="1.6"/><circle cx="11" cy="11" r="1.2" fill="#ef8a45"/><circle cx="2" cy="9" r="1.3" fill="#ef8a45"/></svg>
<svg style="position:absolute;left:1.5px;top:363.0px" width="18" height="18" viewBox="0 0 18 18"><rect x="2" y="2" width="9" height="8" fill="#f9e29c" stroke="#1e3a5c" stroke-width="1.6"/><circle cx="11" cy="11" r="5" fill="#f9e29c" stroke="#1e3a5c" stroke-width="1.6"/><circle cx="11" cy="11" r="1.2" fill="#ef8a45"/><circle cx="2" cy="9" r="1.3" fill="#ef8a45"/></svg>
<svg style="position:absolute;left:1.5px;top:382.0px" width="18" height="18" viewBox="0 0 18 18"><rect x="2" y="2" width="9" height="8" fill="#f9e29c" stroke="#1e3a5c" stroke-width="1.6"/><circle cx="11" cy="12" r="5" fill="#f9e29c" stroke="#1e3a5c" stroke-width="1.6"/><path d="M8 5 Q12 2 15 5" fill="none" stroke="#ef8a45" stroke-width="1.6"/><path d="M13 3 L16 5 L13 7" fill="#ef8a45" stroke="#ef8a45" stroke-width="1.2"/><circle cx="2" cy="9" r="1.3" fill="#ef8a45"/></svg>
<svg style="position:absolute;left:1.5px;top:402.0px" width="18" height="18" viewBox="0 0 18 18"><rect x="3" y="3" width="12" height="12" fill="#f9e29c"/><path d="M3 9 L9 3 M3 14 L14 3 M8 15 L15 8" stroke="#1e3a5c" stroke-width="1"/><path d="M1 3 H17 M1 15 H17 M3 1 V17 M15 1 V17" fill="none" stroke="#1e3a5c" stroke-width="1.8"/></svg>
<svg style="position:absolute;left:1.5px;top:421.0px" width="18" height="18" viewBox="0 0 18 18"><rect x="3" y="3" width="12" height="12" fill="#f9e29c"/><path d="M1 3 H17 M1 15 H17 M3 1 V17 M15 1 V17 M3 15 L15 3" fill="none" stroke="#1e3a5c" stroke-width="1.8"/></svg>
<svg style="position:absolute;left:24.5px;top:149.0px" width="18" height="18" viewBox="0 0 18 18"><path d="M3 15 H16" fill="none" stroke="#1e3a5c" stroke-width="2"/><path d="M6 13 L11 3 L15 5 L10 14 Z" fill="#f9e29c" stroke="#1e3a5c" stroke-width="1.4"/><circle cx="7" cy="13" r="1.8" fill="#ef8a45"/></svg>
<svg style="position:absolute;left:24.5px;top:168.0px" width="18" height="18" viewBox="0 0 18 18"><circle cx="4" cy="5" r="2.6" fill="#f9e29c" stroke="#1e3a5c" stroke-width="1"/><circle cx="10" cy="14" r="3" fill="#f9e29c" stroke="#1e3a5c" stroke-width="1"/><path d="M5 3 Q12 0 14 8" fill="none" stroke="#1e3a5c" stroke-width="2"/><path d="M10 7 L14 11 L17 6" fill="#ef8a45" stroke="#ef8a45" stroke-width="1.5"/></svg>
<svg style="position:absolute;left:24.5px;top:188.0px" width="18" height="18" viewBox="0 0 18 18"><path d="M8 3 L2 15 H8 Z" fill="#f9e29c" stroke="#1e3a5c" stroke-width="1.4"/><path d="M10 3 L16 15 H10 Z" fill="#f9e29c" stroke="#1e3a5c" stroke-width="1.4"/><path d="M9 1 V17" fill="none" stroke="#ef8a45" stroke-width="1"/></svg>
<svg style="position:absolute;left:24.5px;top:207.0px" width="18" height="18" viewBox="0 0 18 18"><path d="M2 13 C1 9 4 7 6 9 C6 5 11 4 12 8 C14 7 16 9 16 11 V13 Z" fill="none" stroke="#1e3a5c" stroke-width="1.6"/><path d="M3 15 H16" fill="none" stroke="#ef8a45" stroke-width="1.2"/></svg>
<svg style="position:absolute;left:24.5px;top:227.0px" width="18" height="18" viewBox="0 0 18 18"><rect x="2" y="2" width="6" height="6" fill="#f9e29c" stroke="#7a7a7a" stroke-width="0.8"/><rect x="10" y="2" width="6" height="6" fill="#f9e29c" stroke="#7a7a7a" stroke-width="0.8"/><rect x="2" y="10" width="6" height="6" fill="#f9e29c" stroke="#7a7a7a" stroke-width="0.8"/><rect x="10" y="10" width="6" height="6" fill="#f9e29c" stroke="#7a7a7a" stroke-width="0.8"/></svg>
<svg style="position:absolute;left:24.5px;top:246.0px" width="18" height="18" viewBox="0 0 18 18"><path d="M9 2 V16 M2 9 H16" fill="none" stroke="#1e3a5c" stroke-width="2.4"/><path d="M9 0 L12 4 H6 Z M9 18 L12 14 H6 Z M0 9 L4 6 V12 Z M18 9 L14 6 V12 Z" fill="#1e3a5c"/></svg>
<svg style="position:absolute;left:24.5px;top:265.0px" width="18" height="18" viewBox="0 0 18 18"><path d="M5 5 A6 6 0 1 0 12 4" fill="none" stroke="#1e3a5c" stroke-width="2.6"/><path d="M2 4 L8 1 L8 9 Z" fill="#1e3a5c"/></svg>
<svg style="position:absolute;left:24.5px;top:285.0px" width="18" height="18" viewBox="0 0 18 18"><path d="M3 10 L9 4 L13 8 L7 14 Z" fill="#f9e29c" stroke="#1e3a5c" stroke-width="1.3"/><path d="M9 4 L12 1 L16 5 L13 8" fill="#f9e29c" stroke="#1e3a5c" stroke-width="1.3"/><path d="M5 15 L15 9" fill="none" stroke="#ef8a45" stroke-width="1.2"/></svg>
<svg style="position:absolute;left:24.5px;top:304.0px" width="18" height="18" viewBox="0 0 18 18"><rect x="2" y="2" width="14" height="14" fill="#f9e29c" stroke="#1e3a5c" stroke-width="1.6"/><path d="M6 6 H9 V13" stroke="#1e3a5c" stroke-width="1" stroke-dasharray="1.5 1.5" fill="none"/></svg>
<svg style="position:absolute;left:24.5px;top:324.0px" width="18" height="18" viewBox="0 0 18 18"><path d="M2 2 H12 L16 16 H2 Z" fill="#f9e29c" stroke="#1e3a5c" stroke-width="1.6"/><path d="M9 3 V15" fill="none" stroke="#1e3a5c" stroke-width="1"/></svg>
<svg style="position:absolute;left:24.5px;top:343.0px" width="18" height="18" viewBox="0 0 18 18"><path d="M2 9 H8" fill="none" stroke="#1e3a5c" stroke-width="1.8"/><path d="M10 9 H16" fill="none" stroke="#1e3a5c" stroke-width="1.2"/><path d="M6 15 L13 3" fill="none" stroke="#ef8a45" stroke-width="1.8"/></svg>
<svg style="position:absolute;left:24.5px;top:363.0px" width="18" height="18" viewBox="0 0 18 18"><path d="M2 9 H7" fill="none" stroke="#1e3a5c" stroke-width="1.8"/><path d="M8 9 H16" fill="none" stroke="#1e3a5c" stroke-width="1.2"/><path d="M9 15 L15 3" fill="none" stroke="#ef8a45" stroke-width="1.8"/></svg>
<svg style="position:absolute;left:24.5px;top:382.0px" width="18" height="18" viewBox="0 0 18 18"><rect x="2" y="3" width="14" height="13" fill="#f9e29c" stroke="#1e3a5c" stroke-width="1.6"/><circle cx="5" cy="3" r="1.6" fill="#ef8a45"/><circle cx="13" cy="3" r="1.6" fill="#ef8a45"/></svg>
<svg style="position:absolute;left:24.5px;top:402.0px" width="18" height="18" viewBox="0 0 18 18"><path d="M3 17 V9 A6 6 0 0 1 9 3 H16" fill="none" stroke="#ef8a45" stroke-width="1.8"/><path d="M2 17 V11 M9 2 H17" fill="none" stroke="#1e3a5c" stroke-width="1.8"/></svg>
<svg style="position:absolute;left:24.5px;top:421.0px" width="18" height="18" viewBox="0 0 18 18"><path d="M3 16 L15 3" fill="none" stroke="#ef8a45" stroke-width="1.6"/><path d="M2 17 V9 M9 2 H17 M2 2 V6 M2 2 H6" fill="none" stroke="#1e3a5c" stroke-width="1.8"/></svg>
<svg style="position:absolute;left:24.5px;top:440.0px" width="18" height="18" viewBox="0 0 18 18"><path d="M9 1 L10.5 6 L15.5 3.5 L12.5 8 L17 11 L12 11 L13 17 L9 12.5 L5 17 L6 11 L1 11 L5.5 8 L2.5 3.5 L7.5 6 Z" fill="#f9e29c" stroke="#1e3a5c" stroke-width="1.2"/><circle cx="9" cy="9.5" r="2.2" fill="#ef8a45"/></svg>
<svg style="position:absolute;left:1260.5px;top:149.0px" width="18" height="18" viewBox="0 0 18 18"><path d="M5 13 L13 5" fill="none" stroke="#1e3a5c" stroke-width="1.8"/><circle cx="5" cy="13" r="2" fill="#fff" stroke="#ef8a45" stroke-width="1.2"/><circle cx="13" cy="5" r="2" fill="#fff" stroke="#ef8a45" stroke-width="1.2"/></svg>
<svg style="position:absolute;left:1260.5px;top:169.0px" width="18" height="18" viewBox="0 0 18 18"><path d="M3 15 L15 3" fill="none" stroke="#1e3a5c" stroke-width="1.8"/><circle cx="9" cy="9" r="2" fill="#fff" stroke="#ef8a45" stroke-width="1.2"/></svg>
<svg style="position:absolute;left:1260.5px;top:188.0px" width="18" height="18" viewBox="0 0 18 18"><circle cx="9" cy="9" r="7" fill="#f9e29c" stroke="#1e3a5c" stroke-width="1.8"/><circle cx="9" cy="9" r="2" fill="#fff" stroke="#ef8a45" stroke-width="1.2"/></svg>
<svg style="position:absolute;left:1260.5px;top:207.0px" width="18" height="18" viewBox="0 0 18 18"><path d="M3 3 L15 15 M15 3 L3 15" fill="none" stroke="#1e3a5c" stroke-width="1.8"/><circle cx="9" cy="9" r="2" fill="#fff" stroke="#ef8a45" stroke-width="1.2"/></svg>
<svg style="position:absolute;left:1260.5px;top:227.0px" width="18" height="18" viewBox="0 0 18 18"><path d="M3 3 L15 15 M15 3 L3 15" stroke="#1e3a5c" stroke-width="1.8" stroke-dasharray="2.5 1.5"/><circle cx="9" cy="9" r="2" fill="#fff" stroke="#ef8a45" stroke-width="1.2"/></svg>
<svg style="position:absolute;left:1260.5px;top:246.0px" width="18" height="18" viewBox="0 0 18 18"><path d="M4 4 H16 M4 4 V17" stroke="#1e3a5c" stroke-width="1.8" stroke-dasharray="2 2"/><circle cx="4" cy="4" r="2" fill="#fff" stroke="#ef8a45" stroke-width="1.2"/></svg>
<svg style="position:absolute;left:1260.5px;top:266.0px" width="18" height="18" viewBox="0 0 18 18"><rect x="3" y="2" width="8" height="8" fill="#f9e29c" stroke="#1e3a5c" stroke-width="1.5"/><circle cx="11" cy="11" r="5.5" fill="#f9e29c" stroke="#1e3a5c" stroke-width="1.6"/><circle cx="3" cy="10" r="1.6" fill="#fff" stroke="#ef8a45" stroke-width="1.2"/></svg>
<svg style="position:absolute;left:1260.5px;top:285.0px" width="18" height="18" viewBox="0 0 18 18"><path d="M9 1 V13 M2 13 H16" fill="none" stroke="#1e3a5c" stroke-width="1.8"/><circle cx="9" cy="13" r="1.8" fill="#fff" stroke="#ef8a45" stroke-width="1.2"/></svg>
<svg style="position:absolute;left:1260.5px;top:305.0px" width="18" height="18" viewBox="0 0 18 18"><path d="M2 16 L14 4" fill="none" stroke="#1e3a5c" stroke-width="1.8"/><circle cx="12" cy="7" r="4" fill="none" stroke="#1e3a5c" stroke-width="1.6"/><circle cx="9" cy="9" r="1.8" fill="#fff" stroke="#ef8a45" stroke-width="1.2"/></svg>
<svg style="position:absolute;left:1260.5px;top:324.0px" width="18" height="18" viewBox="0 0 18 18"><circle cx="9" cy="9" r="2" fill="#fff" stroke="#ef8a45" stroke-width="1.2"/></svg>
<svg style="position:absolute;left:1260.5px;top:344.0px" width="18" height="18" viewBox="0 0 18 18"><path d="M9 2 L16 9 L9 16 L2 9 Z" fill="#f9e29c" stroke="#1e3a5c" stroke-width="1.6"/><circle cx="9" cy="2" r="1.8" fill="#fff" stroke="#ef8a45" stroke-width="1.2"/><circle cx="16" cy="9" r="1.8" fill="#fff" stroke="#ef8a45" stroke-width="1.2"/><circle cx="9" cy="16" r="1.8" fill="#fff" stroke="#ef8a45" stroke-width="1.2"/><circle cx="2" cy="9" r="1.8" fill="#fff" stroke="#ef8a45" stroke-width="1.2"/></svg>
<svg style="position:absolute;left:1260.5px;top:363.0px" width="18" height="18" viewBox="0 0 18 18"><circle cx="10" cy="10" r="6.5" fill="#f9e29c" stroke="#1e3a5c" stroke-width="1.5"/><path d="M3 6 A7 7 0 0 1 9 2" fill="none" stroke="#1e3a5c" stroke-width="1.5"/><circle cx="4" cy="5" r="1.8" fill="#fff" stroke="#ef8a45" stroke-width="1.2"/></svg>
<svg style="position:absolute;left:1260.5px;top:382.0px" width="18" height="18" viewBox="0 0 18 18"><path d="M4 3 V9 A5 5 0 0 0 14 9 V3" fill="none" stroke="#1e3a5c" stroke-width="3"/><path d="M2 16 L16 2" fill="none" stroke="#ef8a45" stroke-width="1.6"/><circle cx="15" cy="15" r="1.8" fill="#fff" stroke="#ef8a45" stroke-width="1.2"/><circle cx="4" cy="3" r="1" fill="#f9e29c"/><circle cx="14" cy="3" r="1" fill="#f9e29c"/></svg>
<svg style="position:absolute;left:1260.5px;top:401.0px" width="18" height="18" viewBox="0 0 18 18"><path d="M4 3 V9 A5 5 0 0 0 14 9 V3" fill="none" stroke="#1e3a5c" stroke-width="3"/><path d="M15 12 L18 17 H12 Z" fill="#ef8a45"/><circle cx="4" cy="3" r="1" fill="#f9e29c"/><circle cx="14" cy="3" r="1" fill="#f9e29c"/></svg>
<div style="position:absolute;left:47px;top:140px;width:1209px;height:1px;background:#d4d4d4"></div>
<div style="position:absolute;left:47px;top:141px;width:1209px;height:504px;background:#ffffff"></div>
<svg width="1208" height="503" viewBox="48 142 1208 503" style="position:absolute;left:48px;top:142px;display:block">
<g fill="none" stroke-width="0.9">
<line x1="196.4" y1="240.0" x2="315.0" y2="396.2" stroke="#c4c4c4"/>
<line x1="480.0" y1="447.0" x2="868.0" y2="140.0" stroke="#c4c4c4"/>
<line x1="551.2" y1="470.6" x2="969.0" y2="140.0" stroke="#c4c4c4"/>
<line x1="147.0" y1="276.3" x2="286.7" y2="460.0" stroke="#c4c4c4"/>
<line x1="262.2" y1="620.0" x2="228.0" y2="647.0" stroke="#c4c4c4"/>
<line x1="1005.0" y1="645.0" x2="1256.0" y2="447.5" stroke="#c4c4c4"/>
<line x1="1117.5" y1="645.0" x2="1256.0" y2="535.0" stroke="#c4c4c4"/>
<path d="M197.1,141.0 C195.4,144.8 189.2,156.1 186.7,163.6 C184.2,171.1 182.9,179.3 182.2,185.8 C181.5,192.3 181.5,196.7 182.5,202.5 C183.5,208.3 185.7,214.2 188.0,220.5 C190.3,226.8 192.9,233.9 196.4,240.0" stroke="#c4c4c4"/>
<path d="M315.0,396.2 C321.2,404.2 327.7,412.3 333.8,420.0 C339.8,427.7 345.4,435.9 351.2,442.5 C357.1,449.1 363.1,455.2 368.8,459.5 C374.4,463.8 379.0,466.0 385.0,468.5 C391.0,471.0 399.2,473.3 405.0,474.4 C410.8,475.5 414.7,475.6 420.0,475.3 C425.3,475.0 429.8,475.2 436.7,472.5 C443.6,469.8 454.5,463.4 461.7,459.2 C468.9,454.9 474.1,451.3 480.0,447.0" stroke="#c4c4c4"/>
<path d="M47.0,257.5 C50.5,256.2 60.8,251.5 67.8,249.9 C74.8,248.3 81.8,248.0 88.7,248.2 C95.7,248.4 102.6,249.3 109.5,251.3 C116.4,253.3 124.1,256.1 130.3,260.3 C136.6,264.5 141.9,270.6 147.0,276.3" stroke="#c4c4c4"/>
<path d="M286.7,460.0 C291.9,467.0 297.9,475.0 302.2,481.1 C306.4,487.2 309.8,491.5 312.2,496.7 C314.6,501.9 315.7,507.2 316.7,512.2 C317.7,517.2 317.9,522.1 318.0,526.7 C318.1,531.3 318.8,533.1 317.6,540.0 C316.5,546.9 314.2,559.9 311.1,567.8 C308.0,575.7 303.3,582.0 298.9,587.3 C294.4,592.6 290.5,594.0 284.4,599.5 C278.3,605.0 269.9,613.5 262.2,620.0" stroke="#c4c4c4"/>
<path d="M551.2,470.6 C542.6,477.3 533.1,484.2 525.0,490.3 C516.9,496.4 508.8,501.7 502.5,507.5 C496.2,513.3 491.5,519.2 487.5,525.0 C483.5,530.8 480.8,536.7 478.8,542.5 C476.7,548.3 476.0,553.8 475.3,560.0 C474.6,566.2 474.0,573.5 474.6,580.0 C475.2,586.5 476.6,592.5 478.8,598.8 C480.9,605.0 483.0,609.5 487.5,617.5 C492.0,625.5 502.9,642.1 506.0,647.0" stroke="#c4c4c4"/>
<path d="M330.6,646.0 C334.2,644.2 344.4,637.7 352.0,635.0 C359.6,632.3 368.2,630.0 376.2,630.0 C384.2,630.0 392.2,632.3 400.0,635.0 C407.8,637.7 419.2,644.2 423.1,646.0" stroke="#c4c4c4"/>
<line x1="450.9" y1="140.0" x2="591.4" y2="338.8" stroke="#ffcc22" stroke-width="1.8" opacity="0.3"/>
<line x1="450.9" y1="140.0" x2="591.4" y2="338.8" stroke="#555555"/>
<line x1="354.0" y1="140.0" x2="531.6" y2="385.0" stroke="#ffcc22" stroke-width="1.8" opacity="0.3"/>
<line x1="354.0" y1="140.0" x2="531.6" y2="385.0" stroke="#555555"/>
<line x1="261.3" y1="140.0" x2="472.1" y2="432.4" stroke="#555555"/>
<line x1="546.5" y1="140.0" x2="653.0" y2="290.5" stroke="#555555"/>
<line x1="641.2" y1="140.0" x2="712.7" y2="243.6" stroke="#555555"/>
<line x1="736.3" y1="140.0" x2="773.3" y2="196.0" stroke="#555555"/>
<line x1="829.0" y1="140.0" x2="834.7" y2="147.8" stroke="#555555"/>
<line x1="285.5" y1="332.5" x2="530.0" y2="140.0" stroke="#555555"/>
<line x1="472.1" y1="432.4" x2="843.0" y2="140.0" stroke="#555555"/>
<line x1="215.1" y1="240.0" x2="326.2" y2="385.0" stroke="#555555"/>
<line x1="47.0" y1="317.5" x2="255.6" y2="604.4" stroke="#555555"/>
<line x1="47.0" y1="448.5" x2="191.0" y2="645.0" stroke="#555555"/>
<line x1="47.0" y1="579.0" x2="95.4" y2="645.0" stroke="#555555"/>
<line x1="47.0" y1="522.0" x2="214.8" y2="391.1" stroke="#555555"/>
<line x1="141.4" y1="293.0" x2="266.7" y2="460.0" stroke="#555555"/>
<line x1="255.6" y1="604.4" x2="202.0" y2="647.0" stroke="#555555"/>
<line x1="570.5" y1="476.0" x2="994.0" y2="140.0" stroke="#555555"/>
<line x1="570.5" y1="476.0" x2="694.3" y2="645.0" stroke="#555555"/>
<line x1="631.5" y1="427.6" x2="789.9" y2="645.0" stroke="#555555"/>
<line x1="691.9" y1="380.0" x2="884.3" y2="645.0" stroke="#555555"/>
<line x1="752.1" y1="332.8" x2="980.0" y2="645.0" stroke="#555555"/>
<line x1="812.3" y1="284.0" x2="1040.0" y2="597.5" stroke="#555555"/>
<line x1="872.5" y1="236.8" x2="1100.0" y2="548.8" stroke="#555555"/>
<line x1="932.7" y1="188.4" x2="1160.0" y2="501.2" stroke="#555555"/>
<line x1="990.3" y1="140.0" x2="1220.0" y2="455.0" stroke="#555555"/>
<line x1="1086.5" y1="140.0" x2="1256.0" y2="370.0" stroke="#555555"/>
<line x1="1181.5" y1="140.0" x2="1256.0" y2="240.0" stroke="#555555"/>
<line x1="668.3" y1="645.0" x2="1256.0" y2="180.0" stroke="#555555"/>
<line x1="980.0" y1="645.0" x2="1256.0" y2="427.5" stroke="#555555"/>
<path d="M216.5,141.0 C214.3,143.8 206.4,152.4 203.3,158.0 C200.2,163.6 199.0,169.6 197.8,174.7 C196.7,179.8 196.4,183.7 196.4,188.6 C196.4,193.5 196.7,199.0 197.8,203.9 C199.0,208.8 200.4,211.8 203.3,217.8 C206.2,223.8 210.6,233.0 215.1,240.0" stroke="#555555"/>
<path d="M326.2,385.0 C332.4,393.0 339.2,401.2 345.0,408.8 C350.8,416.2 356.4,424.2 361.2,430.0 C366.1,435.8 369.2,439.6 374.0,443.5 C378.8,447.4 384.8,451.1 390.0,453.6 C395.2,456.1 400.0,457.6 405.0,458.6 C410.0,459.6 414.7,459.8 420.0,459.4 C425.3,459.0 430.9,458.5 436.7,456.4 C442.5,454.3 449.0,450.6 455.0,446.7 C461.0,442.8 466.7,437.7 472.5,433.1" stroke="#555555"/>
<path d="M47.0,275.0 C49.1,273.9 55.3,270.4 59.5,268.6 C63.7,266.9 67.1,265.2 72.0,264.5 C76.9,263.8 83.2,264.0 88.7,264.5 C94.2,265.0 99.3,265.1 105.3,267.2 C111.3,269.4 118.8,273.4 124.8,277.7 C130.8,282.0 136.4,287.5 141.4,293.0" stroke="#555555"/>
<path d="M266.7,460.0 C272.3,467.4 278.7,476.3 283.3,482.2 C287.9,488.1 291.6,491.3 294.4,495.6 C297.2,499.9 298.6,503.4 300.0,507.8 C301.4,512.2 302.2,516.8 302.8,522.2 C303.4,527.6 303.7,534.6 303.3,540.0 C302.9,545.4 302.1,549.6 300.5,554.4 C298.9,559.2 296.5,564.6 293.8,569.0 C291.1,573.4 287.8,577.1 284.4,580.6 C281.0,584.1 278.1,586.0 273.3,590.0 C268.5,594.0 261.5,599.6 255.6,604.4" stroke="#555555"/>
<path d="M570.5,476.0 C562.0,482.6 553.8,488.9 545.0,495.6 C536.2,502.3 525.0,510.3 518.0,516.0 C511.0,521.7 506.8,525.6 503.0,530.0 C499.2,534.4 497.0,537.8 495.0,542.5 C493.0,547.2 492.1,552.8 491.2,558.0 C490.4,563.2 489.8,567.8 490.0,573.8 C490.2,579.7 490.8,587.3 492.5,593.8 C494.2,600.2 496.7,606.7 500.0,612.5 C503.3,618.3 508.2,622.8 512.5,628.5 C516.8,634.2 523.8,643.9 526.0,647.0" stroke="#555555"/>
<circle cx="222.5" cy="185.8" r="16.0" stroke="#0000ff" stroke-width="0.85" fill="none"/>
<circle cx="787.5" cy="149.4" r="16.0" stroke="#0000ff" stroke-width="0.85" fill="none"/>
<circle cx="727.8" cy="196.0" r="16.0" stroke="#0000ff" stroke-width="0.85" fill="none"/>
<circle cx="667.8" cy="243.8" r="16.0" stroke="#0000ff" stroke-width="0.85" fill="none"/>
<circle cx="607.4" cy="291.0" r="16.0" stroke="#0000ff" stroke-width="0.85" fill="none"/>
<circle cx="547.0" cy="339.2" r="16.0" stroke="#0000ff" stroke-width="0.85" fill="none"/>
<circle cx="486.8" cy="386.4" r="16.0" stroke="#0000ff" stroke-width="0.85" fill="none"/>
<circle cx="411.4" cy="431.0" r="16.0" stroke="#0000ff" stroke-width="0.85" fill="none"/>
<circle cx="88.7" cy="301.5" r="22.4" stroke="#0000ff" stroke-width="0.85" fill="none"/>
<circle cx="263.8" cy="535.1" r="22.5" stroke="#0000ff" stroke-width="0.85" fill="none"/>
<circle cx="203.5" cy="597.0" r="22.0" stroke="#0000ff" stroke-width="0.85" fill="none"/>
<circle cx="143.3" cy="643.8" r="22.0" stroke="#0000ff" stroke-width="0.85" fill="none"/>
<circle cx="525.7" cy="568.9" r="22.0" stroke="#0000ff" stroke-width="0.85" fill="none"/>
<circle cx="623.9" cy="481.1" r="22.0" stroke="#0000ff" stroke-width="0.85" fill="none"/>
<circle cx="684.4" cy="433.6" r="22.0" stroke="#0000ff" stroke-width="0.85" fill="none"/>
<circle cx="743.8" cy="385.7" r="22.0" stroke="#0000ff" stroke-width="0.85" fill="none"/>
<circle cx="804.3" cy="338.0" r="22.0" stroke="#0000ff" stroke-width="0.85" fill="none"/>
<circle cx="864.9" cy="288.7" r="22.0" stroke="#0000ff" stroke-width="0.85" fill="none"/>
<circle cx="923.2" cy="242.7" r="22.0" stroke="#0000ff" stroke-width="0.85" fill="none"/>
<circle cx="985.0" cy="195.0" r="22.0" stroke="#0000ff" stroke-width="0.85" fill="none"/>
<circle cx="1045.0" cy="148.8" r="22.0" stroke="#0000ff" stroke-width="0.85" fill="none"/>
<circle cx="1228.8" cy="398.8" r="22.0" stroke="#0000ff" stroke-width="0.85" fill="none"/>
<circle cx="1168.2" cy="447.0" r="22.0" stroke="#0000ff" stroke-width="0.85" fill="none"/>
<circle cx="1108.8" cy="496.2" r="22.0" stroke="#0000ff" stroke-width="0.85" fill="none"/>
<circle cx="1047.5" cy="542.0" r="22.0" stroke="#0000ff" stroke-width="0.85" fill="none"/>
<circle cx="987.5" cy="590.0" r="22.0" stroke="#0000ff" stroke-width="0.85" fill="none"/>
<circle cx="926.8" cy="636.7" r="22.0" stroke="#0000ff" stroke-width="0.85" fill="none"/>
</g>
<g fill="#0000f0" font-family="Liberation Sans, sans-serif">
<text x="0" y="6.67" font-size="18.8" text-anchor="middle" transform="translate(222.5 185.8) rotate(-90) scale(0.88 1)">234</text>
<text x="0" y="6.67" font-size="18.8" text-anchor="middle" transform="translate(787.5 149.4) rotate(-37) scale(0.88 1)">253</text>
<text x="0" y="6.67" font-size="18.8" text-anchor="middle" transform="translate(727.8 196.0) rotate(-37) scale(0.88 1)">254</text>
<text x="0" y="6.67" font-size="18.8" text-anchor="middle" transform="translate(667.8 243.8) rotate(-37) scale(0.88 1)">255</text>
<text x="0" y="6.67" font-size="18.8" text-anchor="middle" transform="translate(607.4 291.0) rotate(-37) scale(0.88 1)">256</text>
<text x="0" y="6.67" font-size="18.8" text-anchor="middle" transform="translate(547.0 339.2) rotate(-37) scale(0.88 1)">257</text>
<text x="0" y="6.67" font-size="18.8" text-anchor="middle" transform="translate(486.8 386.4) rotate(-37) scale(0.88 1)">258</text>
<text x="0" y="6.67" font-size="18.8" text-anchor="middle" transform="translate(411.4 431.0) rotate(0) scale(0.88 1)">259</text>
<text x="0" y="9.94" font-size="28.0" text-anchor="middle" transform="translate(88.7 301.5) rotate(0) scale(0.92 1)">233</text>
<text x="0" y="9.94" font-size="28.0" text-anchor="middle" transform="translate(263.8 535.1) rotate(-90) scale(0.92 1)">208</text>
<text x="0" y="9.05" font-size="25.5" text-anchor="middle" transform="translate(203.5 597.0) rotate(-37) scale(0.92 1)">209</text>
<text x="0" y="9.05" font-size="25.5" text-anchor="middle" transform="translate(143.3 643.8) rotate(-37) scale(0.92 1)">210</text>
<text x="0" y="9.94" font-size="28.0" text-anchor="middle" transform="translate(525.7 568.9) rotate(-90) scale(0.92 1)">260</text>
<text x="0" y="9.05" font-size="25.5" text-anchor="middle" transform="translate(623.9 481.1) rotate(-37) scale(0.92 1)">261</text>
<text x="0" y="9.05" font-size="25.5" text-anchor="middle" transform="translate(684.4 433.6) rotate(-37) scale(0.92 1)">262</text>
<text x="0" y="9.05" font-size="25.5" text-anchor="middle" transform="translate(743.8 385.7) rotate(-37) scale(0.92 1)">263</text>
<text x="0" y="9.05" font-size="25.5" text-anchor="middle" transform="translate(804.3 338.0) rotate(-37) scale(0.92 1)">264</text>
<text x="0" y="9.05" font-size="25.5" text-anchor="middle" transform="translate(864.9 288.7) rotate(-37) scale(0.92 1)">265</text>
<text x="0" y="9.05" font-size="25.5" text-anchor="middle" transform="translate(923.2 242.7) rotate(-37) scale(0.92 1)">266</text>
<text x="0" y="9.05" font-size="25.5" text-anchor="middle" transform="translate(985.0 195.0) rotate(-37) scale(0.92 1)">267</text>
<text x="0" y="9.05" font-size="25.5" text-anchor="middle" transform="translate(1045.0 148.8) rotate(-37) scale(0.92 1)">268</text>
<text x="0" y="9.05" font-size="25.5" text-anchor="middle" transform="translate(1228.8 398.8) rotate(-37) scale(0.92 1)">275</text>
<text x="0" y="9.05" font-size="25.5" text-anchor="middle" transform="translate(1168.2 447.0) rotate(-37) scale(0.92 1)">276</text>
<text x="0" y="9.05" font-size="25.5" text-anchor="middle" transform="translate(1108.8 496.2) rotate(-37) scale(0.92 1)">277</text>
<text x="0" y="9.05" font-size="25.5" text-anchor="middle" transform="translate(1047.5 542.0) rotate(-37) scale(0.92 1)">278</text>
<text x="0" y="9.05" font-size="25.5" text-anchor="middle" transform="translate(987.5 590.0) rotate(-37) scale(0.92 1)">279</text>
<text x="0" y="9.05" font-size="25.5" text-anchor="middle" transform="translate(926.8 636.7) rotate(-37) scale(0.92 1)">280</text>
</g>
<circle cx="983.75" cy="393.3" r="19.2" fill="none" stroke="#f8e2ad" stroke-width="1"/>
<text x="983.5" y="406.7" font-size="35.5" font-family="Liberation Sans, sans-serif" fill="#f5d98c" text-anchor="middle" transform="translate(983.5 0) scale(0.86 1) translate(-983.5 0)">K</text>
<g stroke="#333" stroke-width="1" fill="none" shape-rendering="crispEdges">
<line x1="402" y1="325.5" x2="499" y2="325.5"/><line x1="450.5" y1="275" x2="450.5" y2="376"/>
<rect x="447.5" y="321.5" width="6" height="7"/>
</g>
</svg>
<div style="position:absolute;left:90px;top:645px;width:1167px;height:1px;background:#d6d6d6"></div>
<div style="position:absolute;left:1256px;top:141px;width:1px;height:505px;background:#d6d6d6"></div>
<div style="position:absolute;left:1257px;top:645px;width:2px;height:17px;background:#f6f6f6"></div>
<div style="position:absolute;left:47px;top:646px;width:1209px;height:16px;background:#f6f6f6"></div>
<div style="position:absolute;left:47px;top:646px;width:43px;height:16px;background:#ffffff"></div>
<div style="position:absolute;left:90px;top:646px;width:52px;height:15px;background:#ebebeb"></div>
<div style="position:absolute;left:56px;top:648px;white-space:nowrap;font-size:9.5px;line-height:12px;font-weight:bold;color:#111;letter-spacing:0px">C A D</div>
<div style="position:absolute;left:101px;top:648px;white-space:nowrap;font-size:8.6px;line-height:12px;color:#222;">RASTER</div>
<div style="position:absolute;left:0px;top:662px;width:1280px;height:16px;background:#f7f7f7"></div>
<div style="position:absolute;left:1px;top:663px;width:147px;height:15px;background:#efefef"></div>
<div style="position:absolute;left:3.5px;top:664.5px;white-space:nowrap;font-size:8.5px;line-height:12px;color:#1a1a1a;">229915.71020 , 7480090.30945</div>
<div class="sb" style="left:148.8px;width:47.5px">Ortho - F8</div>
<div class="sb" style="left:196.2px;width:48.0px">Osnap - F3</div>
<div class="sb" style="left:244.2px;width:47.5px">Atrib - F4</div>
<div class="sb" style="left:291.8px;width:47.5px">SGrip - F5</div>
<div class="sb" style="left:339.2px;width:48.2px">Grid - F7</div>
<div class="sb" style="left:387.5px;width:48.2px">Snap - F9</div>
<div class="sb" style="left:435.8px;width:53.9px">RTexto - F10</div>
<div class="sb" style="left:489.7px;width:49.1px">Nome - F11</div>
<div class="sb" style="left:538.8px;width:47.8px">Filtro - F12</div>
<div class="sb" style="left:586.5px;width:47.9px">Snap Pto</div>
<div class="sb" style="left:634.4px;width:48.1px">Snap 3D</div>
<div class="sb" style="left:682.5px;width:41.5px">Georref.</div>
<div style="position:absolute;left:723px;top:663px;width:1px;height:15px;background:#c9c9c9"></div>
<div style="position:absolute;left:0px;top:678px;width:1280px;height:1px;background:#a8a8a8"></div>
<div style="position:absolute;left:0px;top:679px;width:1280px;height:41px;background:#ffffff"></div>
<div style="position:absolute;left:0px;top:533px;width:1.5px;height:146px;background:#111"></div>
<div style="position:absolute;left:4px;top:682px;white-space:nowrap;font-size:9.7px;line-height:12px;color:#222;">Comando: &lt;Osnap desligado&gt;</div>
<div style="position:absolute;left:4px;top:696px;white-space:nowrap;font-size:9.7px;line-height:12px;color:#222;">Comando: &lt;SGrip desligado&gt;</div>
<div style="position:absolute;left:0px;top:709px;width:55px;height:11px;background:#f3f3f3"></div>
<div style="position:absolute;left:4px;top:710px;white-space:nowrap;font-size:9.7px;line-height:12px;color:#1e3a5c;font-weight:bold">Comando:</div>
<div style="position:absolute;left:1269px;top:680px;width:11px;height:30px;background:#e6e6e6"></div>
<div style="position:absolute;left:1270px;top:686px;width:10px;height:10px;background:linear-gradient(#9a9a9a,#6a6a6a)"></div>
<svg style="position:absolute;left:1271px;top:700px" width="8" height="6" viewBox="0 0 8 6"><path d="M0 1 H8 L4 5 Z" fill="#555"/></svg>
</body></html>
